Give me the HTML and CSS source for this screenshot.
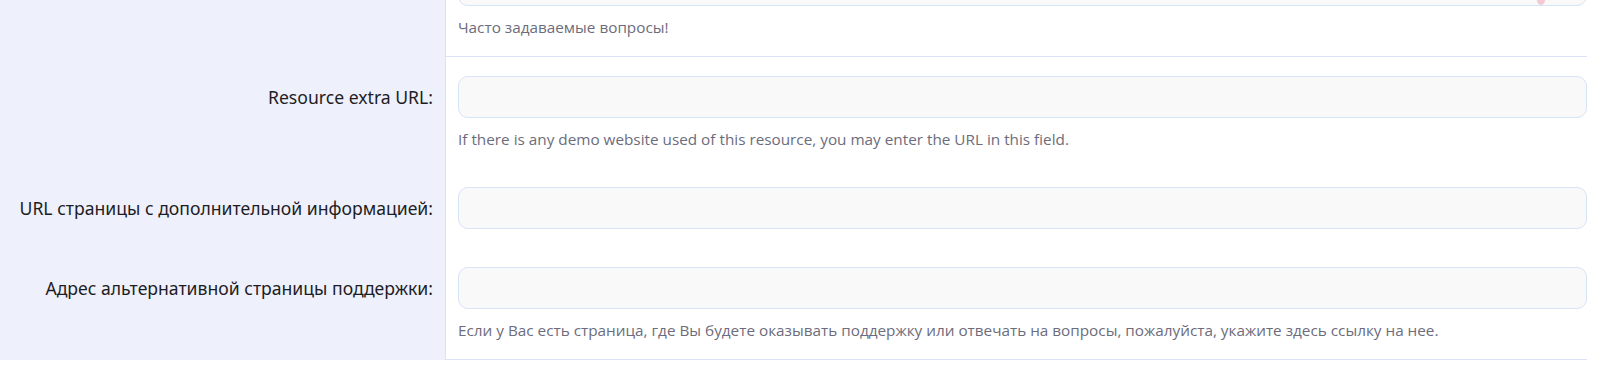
FILE: index.html
```html
<!DOCTYPE html>
<html>
<head>
  <title>Resource fields</title>
  <link rel="stylesheet" href="styles.css">
</head>
<body>
  <div class="form">
    <div class="form-row group-end scrolled">
      <div class="label-cell"></div>
      <div class="field-cell">
        <div class="input-wrap">
          <input class="input" type="text">
          <span class="spell-dot"></span>
        </div>
        <div class="hint">Часто задаваемые вопросы!</div>
      </div>
    </div>

    <div class="form-row">
      <label class="label-cell">Resource extra URL:</label>
      <div class="field-cell">
        <input class="input" type="text">
        <div class="hint">If there is any demo website used of this resource, you may enter the URL in this field.</div>
      </div>
    </div>

    <div class="form-row">
      <label class="label-cell">URL страницы с дополнительной информацией:</label>
      <div class="field-cell">
        <input class="input" type="text">
      </div>
    </div>

    <div class="form-row group-end">
      <label class="label-cell">Адрес альтернативной страницы поддержки:</label>
      <div class="field-cell">
        <input class="input" type="text">
        <div class="hint">Если у Вас есть страница, где Вы будете оказывать поддержку или отвечать на вопросы, пожалуйста, укажите здесь ссылку на нее.</div>
      </div>
    </div>
  </div>
</body>
</html>
```

FILE: styles.css
```css
body{
  margin: 0;
  background-color: white;
  font-family: "Open Sans", sans-serif;
}

.form{
  min-height: 100vh;
  margin-right: 11px;
  background: linear-gradient(to right, #eef0fc 445px, #d9e3f6 445px, #d9e3f6 446px, white 446px);
}

.form-row{
  display: grid;
  grid-template-columns: 446px 1fr;
}

/* page is scrolled down a bit */
.scrolled{
  margin-top: -55px;
}

.label-cell{
  display: block;
  padding: 30px 13px 0 0;
  text-align: right;
  font-family: "Noto Sans", sans-serif;
  font-size: 17.6px;
  line-height: 20px;
  color: #1d1d24;
}

.field-cell{
  padding: 19px 0 19px 12px;
}

.group-end .field-cell{
  border-bottom: 1px solid #d9e3f6;
}

.input-wrap{
  position: relative;
}

.input{
  display: block;
  box-sizing: border-box;
  width: 100%;
  height: 42px;
  margin: 0;
  border: 1px solid #d6e4f8;
  border-radius: 10px;
  background-color: #f9f9f9;
  font-family: "Open Sans", sans-serif;
  font-size: 15px;
}

.spell-dot{
  position: absolute;
  right: 42px;
  bottom: 1px;
  width: 8px;
  height: 10px;
  border-radius: 50%;
  background-color: #f5c9d2;
}

.hint{
  margin-top: 11px;
  font-size: 15.3px;
  line-height: 20px;
  color: #6c6c7c;
}
```
